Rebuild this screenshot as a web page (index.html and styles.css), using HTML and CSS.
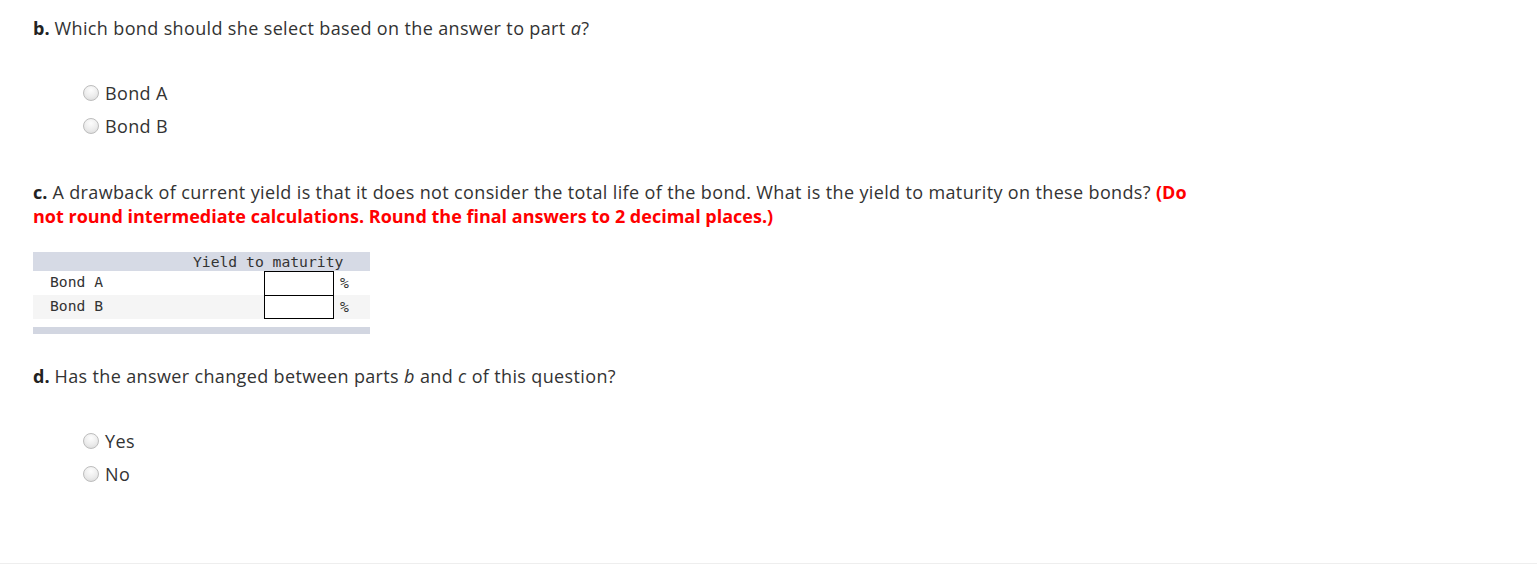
FILE: index.html
```html
<!DOCTYPE html>
<html>
<head>
<meta charset="utf-8">
<link rel="stylesheet" href="styles.css">
</head>
<body>
<div class="page">
  <p class="q q-b"><b>b.</b> Which bond should she select based on the answer to part <i>a</i>?</p>
  <div class="choices choices-b">
    <label class="choice"><span class="radio"></span>Bond A</label>
    <label class="choice"><span class="radio"></span>Bond B</label>
  </div>

  <p class="q q-c"><b>c.</b> A drawback of current yield is that it does not consider the total life of the bond. What is the yield to maturity on these bonds? <span class="red">(Do<br>not round intermediate calculations. Round the final answers to 2 decimal places.)</span></p>

  <div class="tbl">
    <div class="thead"><span class="h-label"></span><span class="h-col">Yield to maturity</span></div>
    <div class="row"><span class="r-label">Bond A</span><span class="r-input"><span class="box"></span></span><span class="pct">%</span></div>
    <div class="row alt"><span class="r-label">Bond B</span><span class="r-input"><span class="box box2"></span></span><span class="pct">%</span></div>
    <div class="tfoot"></div>
  </div>

  <p class="q q-d"><b>d.</b> Has the answer changed between parts <i>b</i> and <i>c</i> of this question?</p>
  <div class="choices choices-d">
    <label class="choice"><span class="radio"></span>Yes</label>
    <label class="choice"><span class="radio"></span>No</label>
  </div>
</div>
<div class="bottom-line"></div>
</body>
</html>
```

FILE: styles.css
```css
html, body {
  margin: 0;
  padding: 0;
  background: #fff;
}
body {
  width: 1537px;
  height: 571px;
  overflow: hidden;
  position: relative;
  font-family: "Open Sans", Lato, sans-serif;
  color: #333;
}
.page {
  padding: 16px 0 0 33px;
  height: 546px;
}
.q {
  margin: 0;
  font-size: 18px;
  line-height: 24px;
  letter-spacing: 0.36px;
  white-space: nowrap;
}
.q b {
  font-weight: 700;
  color: #222;
  letter-spacing: 0;
}
.q i {
  font-style: italic;
}
.red {
  color: #f00;
  font-weight: 700;
  letter-spacing: 0;
}
.choices {
  display: flex;
  flex-direction: column;
  gap: 9px;
  padding-left: 50px;
}
.choices-b {
  margin-top: 41px;
}
.choices-d {
  margin-top: 41px;
}
.choice {
  display: flex;
  align-items: center;
  gap: 6px;
  font-size: 18px;
  line-height: 24px;
  letter-spacing: 0.36px;
  color: #333;
}
.radio {
  width: 14px;
  height: 14px;
  border-radius: 50%;
  border: 1px solid #bdbdbd;
  background: radial-gradient(circle at 50% 30%, #fdfdfd 0%, #ececec 55%, #d6d6d6 100%);
  box-sizing: content-box;
}
.q-c {
  margin-top: 42px;
}
.tbl {
  margin-top: 24px;
  width: 337px;
  font-family: "DejaVu Sans Mono", "Liberation Mono", monospace;
  font-size: 14.7px;
  color: #333;
}
.thead {
  display: flex;
  background: #d6dae5;
  height: 19px;
  line-height: 19px;
}
.h-label {
  width: 160px;
}
.row {
  display: flex;
  align-items: center;
  height: 24px;
  line-height: 20px;
  background: #fff;
}
.row.alt {
  background: #f5f5f5;
}
.r-label {
  width: 214px;
  padding-left: 17px;
  padding-bottom: 2px;
  box-sizing: border-box;
}
.r-input {
  width: 70px;
  margin-left: 17px;
  height: 24px;
  position: relative;
}
.box {
  position: absolute;
  left: 0;
  top: 0;
  width: 70px;
  height: 25px;
  border: 1px solid #000;
  box-sizing: border-box;
  background: #fff;
}
.box2 {
  height: 24px;
}
.pct {
  margin-left: 6px;
}
.tfoot {
  margin-top: 8px;
  height: 7px;
  background: #d2d6e1;
}
.q-d {
  margin-top: 30px;
}
.bottom-line {
  position: absolute;
  left: 0;
  right: 0;
  top: 563px;
  height: 1px;
  background: #eeeeee;
}
```
